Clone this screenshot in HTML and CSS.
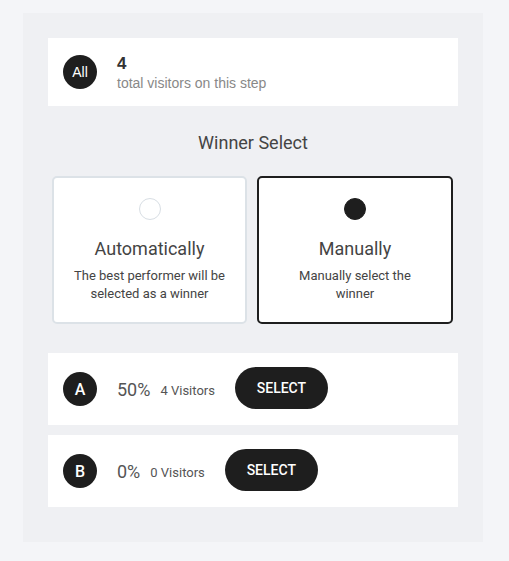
FILE: index.html
```html
<!DOCTYPE html>
<html>
<head>
<meta charset="utf-8">
<link rel="stylesheet" href="styles.css">
</head>
<body>
<div class="panel">
  <div class="summary">
    <div class="badge badge-all">All</div>
    <div class="summary-text">
      <div class="summary-count">4</div>
      <div class="summary-label">total visitors on this step</div>
    </div>
  </div>

  <div class="heading">Winner Select</div>

  <div class="options">
    <div class="option">
      <span class="radio"></span>
      <div class="option-title">Automatically</div>
      <div class="option-desc">The best performer will be selected as a winner</div>
    </div>
    <div class="option option-active">
      <span class="radio radio-on"></span>
      <div class="option-title">Manually</div>
      <div class="option-desc">Manually select the<br>winner</div>
    </div>
  </div>

  <div class="variants">
    <div class="variant">
      <div class="badge">A</div>
      <span class="pct">50%</span>
      <span class="visitors">4 Visitors</span>
      <button class="select-btn">SELECT</button>
    </div>
    <div class="variant">
      <div class="badge">B</div>
      <span class="pct">0%</span>
      <span class="visitors">0 Visitors</span>
      <button class="select-btn">SELECT</button>
    </div>
  </div>
</div>
</body>
</html>
```

FILE: styles.css
```css
* { box-sizing: border-box; }
html, body { margin: 0; padding: 0; }
body {
  background: #f4f5f8;
  font-family: Roboto, "Liberation Sans", Arial, sans-serif;
  color: #444;
}
.panel {
  margin: 13px 0 0 23px;
  width: 460px;
  height: 529px;
  background: #eff0f3;
  padding: 25px 25px 35px 25px;
}
.summary {
  background: #fff;
  height: 68px;
  display: flex;
  align-items: center;
  padding-left: 15px;
  gap: 20px;
}
.badge {
  width: 34px;
  height: 34px;
  border-radius: 50%;
  background: #1e1e1e;
  color: #fff;
  display: flex;
  align-items: center;
  justify-content: center;
  font-family: Roboto, sans-serif;
  font-weight: 500;
  font-size: 16px;
  flex: none;
}
.badge-all {
  font-family: "Liberation Sans", Arial, sans-serif;
  font-weight: 400;
  font-size: 14px;
}
.summary-text {
  font-family: "Liberation Sans", Arial, sans-serif;
  margin-top: 2px;
}
.summary-count {
  font-weight: 700;
  font-size: 17px;
  color: #333;
  line-height: 20px;
}
.summary-label {
  font-size: 14px;
  color: #888;
  line-height: 18px;
}
.heading {
  text-align: center;
  font-size: 18px;
  color: #444;
  margin-top: 26px;
  line-height: 22px;
}
.options {
  display: grid;
  grid-template-columns: 195px 196px;
  gap: 10px;
  margin: 22px 5px 0 4px;
}
.option {
  height: 148px;
  background: #fff;
  border: 2px solid #dce2e7;
  border-radius: 5px;
  display: flex;
  flex-direction: column;
  align-items: center;
  padding: 20px 8px 0;
  text-align: center;
}
.option-active {
  border-color: #1e1e1e;
}
.radio {
  width: 22px;
  height: 22px;
  border-radius: 50%;
  border: 1px solid #d8dee4;
  background: #fff;
  flex: none;
}
.radio-on {
  background: #1e1e1e;
  border-color: #1e1e1e;
}
.option-title {
  font-size: 18px;
  color: #444;
  margin-top: 18px;
  line-height: 22px;
}
.option-desc {
  font-size: 13px;
  color: #444;
  line-height: 18px;
  margin-top: 7px;
  padding: 0 10px;
}
.variants {
  display: flex;
  flex-direction: column;
  gap: 10px;
  margin-top: 29px;
}
.variant {
  background: #fff;
  height: 72px;
  display: flex;
  align-items: center;
  padding-left: 15px;
}
.pct {
  margin-left: 20px;
  font-size: 18px;
  color: #555;
  font-weight: 400;
}
.visitors {
  margin-left: 10px;
  font-size: 13px;
  color: #555;
  margin-top: 2px;
}
.select-btn {
  margin-left: 20px;
  height: 42px;
  width: 93px;
  border: none;
  border-radius: 21px;
  background: #1e1e1e;
  color: #fff;
  font-family: Roboto, sans-serif;
  font-weight: 500;
  font-size: 14px;
  padding: 0;
  margin-top: -2px;
}
```
